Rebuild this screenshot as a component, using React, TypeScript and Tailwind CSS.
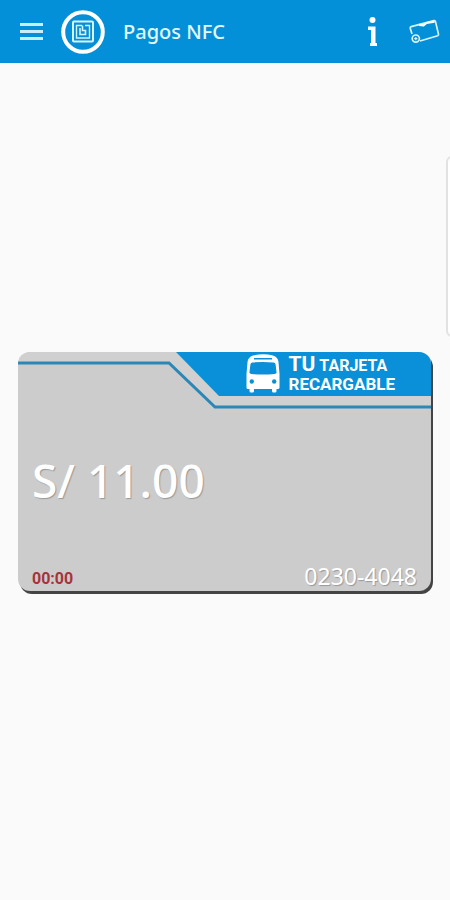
import { useState } from "react";

function NfcLogo() {
  return (
    <svg viewBox="0 0 44 44" className="size-11 shrink-0" fill="none" stroke="#fff">
      <circle cx="22" cy="22" r="19.800" strokeWidth="4" />
      <g stroke="#d5f3fa">
        <rect x="12" y="11.500" width="20" height="20" rx="1" strokeWidth="2" />
        <path d="M21 15.500h-5.500v12.500h13v-12.500h-4.500" strokeWidth="1.400" />
        <path d="M19 18v6.500h5.500v-4h-3V15.500" strokeWidth="1.600" />
      </g>
    </svg>
  );
}

function CardIcon() {
  return (
    <svg viewBox="0 0 32 26" className="h-6.5 w-8" fill="none" stroke="#d5f3fa" strokeWidth="1.7" strokeLinejoin="round">
      <path d="M4 15 2.200 9.200Q2 8 3.200 7.600L26 1.600Q27.200 1.400 27.500 2.600L30.500 15.200Q30.700 16.400 29.700 16.800L12 22" />
      <path d="M11 5.800 15.500 6.300 18.500 4 26.500 2.600" stroke="#fff" strokeWidth="2.200" />
      <circle cx="7.800" cy="19.600" r="3.600" />
      <path d="M6.200 19.600h3.200M7.800 18v3.200" strokeWidth="1.200" />
    </svg>
  );
}

function BusIcon() {
  return (
    <svg viewBox="0 0 34 40" className="h-10 w-8.5 shrink-0" fill="#fff">
      <path d="M7 1.500Q17-.8 27 1.500Q32 3 32.500 8L33.500 20V33.500Q33.500 35 32 35H30.500V37Q30.500 38.500 29 38.500H27.500Q26 38.500 26 37V35H8V37Q8 38.500 6.500 38.500H5Q3.500 38.500 3.500 37V35H2Q.5 35 .5 33.500V20L1.500 8Q2 3 7 1.500Z" />
      <path d="M8 4h18v1.400H8zM6.500 8.500Q17 7.500 27.500 8.500Q29.300 8.700 29.600 10.500L30.500 18Q31 19.800 28.500 20Q17 21 5.500 20Q3 19.800 3.500 18L4.400 10.500Q4.700 8.700 6.500 8.500Z" fill="#0a90d8" />
      <circle cx="5.800" cy="27.500" r="2.200" fill="#0a90d8" />
      <circle cx="28.200" cy="27.500" r="2.200" fill="#0a90d8" />
    </svg>
  );
}

export default function App() {
  const [menuOpen, setMenuOpen] = useState(false);

  return (
    <div className="relative min-h-screen overflow-x-hidden bg-[#fafafa] font-['Noto_Sans',sans-serif] text-white">
      <header className="flex h-[63px] items-center bg-[#0390d8] pr-2.5 pl-5">
        <button
          aria-label="Menú"
          aria-expanded={menuOpen}
          onClick={() => setMenuOpen(!menuOpen)}
          className="flex w-[23px] flex-col gap-1"
        >
          <span className="h-[3px] bg-[#c8eff9]" />
          <span className="h-[3px] bg-[#c8eff9]" />
          <span className="h-[3px] bg-[#c8eff9]" />
        </button>
        <div className="ml-[18px]">
          <NfcLogo />
        </div>
        <h1 className="ml-[18px] text-[20px] leading-7 font-medium text-[#e2f8fc]">Pagos NFC</h1>
        <button aria-label="Información" className="ml-auto flex w-6 justify-center">
          <svg viewBox="0 0 12 32" className="h-8 w-3" fill="#fff">
            <circle cx="6.500" cy="4" r="3" />
            <path d="M2 10.500h7.500v16.500h1.500v3H4v-3h1v-13H2z" />
          </svg>
        </button>
        <button aria-label="Tarjetas" className="ml-6">
          <CardIcon />
        </button>
      </header>

      <main className="px-[18px] pt-[289px]">
        <section className="relative mr-px flex h-[239px] flex-col overflow-hidden rounded-xl bg-[#ccc] shadow-[2px_3px_0_#444]">
          {/* Card artwork */}
          <svg
            viewBox="0 0 413 60"
            preserveAspectRatio="xMaxYMin slice"
            className="absolute inset-x-0 top-0 h-[60px] w-full"
          >
            <path d="M0 0H413V55H197L151 11H0Z" fill="#d0d0d0" />
            <path d="M158 0H413V44H201Z" fill="#0a90d8" />
            <path d="M0 11H151L197 55H413" fill="none" stroke="#2a87b6" strokeWidth="3" />
          </svg>

          <div className="relative flex h-11 items-start justify-end gap-2 pr-9 font-['Roboto',sans-serif] font-bold">
            <div className="pt-0.5">
              <BusIcon />
            </div>
            <div className="flex flex-col">
              <div className="flex items-baseline gap-1">
                <span className="text-[21px] leading-6">TU</span>
                <span className="text-[16px] leading-5">TARJETA</span>
              </div>
              <span className="text-[17px] leading-4">RECARGABLE</span>
            </div>
          </div>

          <p className="relative mt-[52px] pl-3.5 text-[46px] leading-[64px] font-medium [text-shadow:1px_1px_1px_#999]">
            S/ 11.00
          </p>

          <div className="relative mt-auto flex items-end justify-between pr-3.5 pl-3.5">
            <span className="font-['Roboto',sans-serif] text-[16px] leading-6 font-bold text-[#a8323a]">00:00</span>
            <span className="text-[23px] leading-[30px] [text-shadow:1px_1px_1px_#999]">0230-4048</span>
          </div>
        </section>
      </main>

      {/* Edge panel handle peeking in from the right */}
      <div className="absolute top-[156px] -right-3 h-[181px] w-4 rounded-md border-2 border-[#e2e2e2] bg-white" />
    </div>
  );
}
